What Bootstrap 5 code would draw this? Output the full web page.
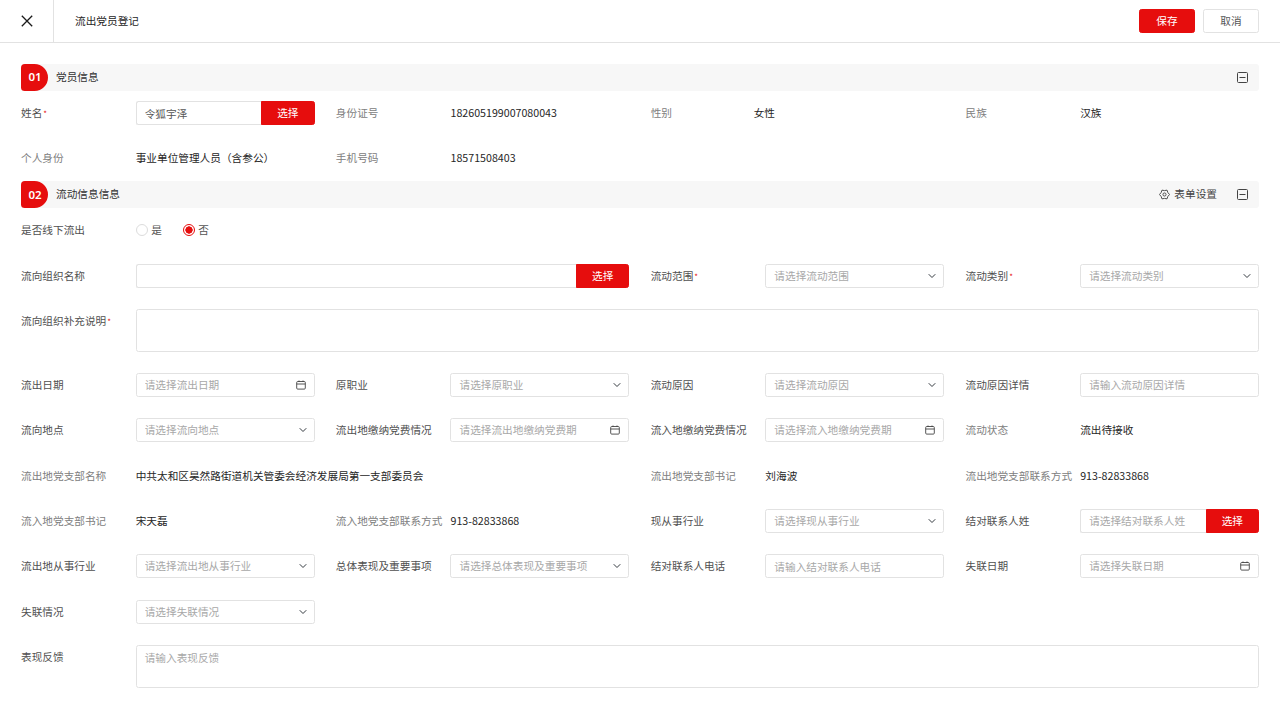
<!DOCTYPE html>
<html lang="zh">
<head>
  <meta charset="UTF-8" />
  <title>流出党员登记</title>
  <link href="https://cdn.jsdelivr.net/npm/bootstrap@5.3.2/dist/css/bootstrap.min.css" rel="stylesheet" />
  <style>
    body {
      font-family: "Noto Sans CJK SC", "Noto Sans", sans-serif;
      font-size: 10.67px;
      color: #262626;
      background: #fff;
      overflow: hidden;
    }
    .top-bar { height: 43px; border-bottom: 1px solid #e2e2e2; }
    .close-cell { width: 54px; border-right: 1px solid #e2e2e2; }
    .top-title { margin-left: 21px; color: #262626; padding-bottom: 1px; }
    .top-actions { padding-right: 21px; }
    .btn-red, .btn-red:hover {
      background: #e60d0d; border: 1px solid #e60d0d; color: #fff;
      font-size: 10.67px; padding: 0; border-radius: 2.5px;
    }
    .btn-plain, .btn-plain:hover {
      background: #fff; border: 1px solid #e2e2e2; color: #555;
      font-size: 10.67px; padding: 0; border-radius: 2.5px;
    }
    .top-btn { width: 56px; height: 24px; }
    .form-body { padding: 21px 21px 0; }
    .sec-head { height: 27px; background: #f7f7f7; border-radius: 3px; padding-right: 11px; }
    .sec-no {
      width: 27px; height: 27px; background: #e60d0d; color: #fff;
      border-radius: 4px 14px 14px 4px; font-weight: 600; font-size: 11.5px;
      font-family: "Noto Sans", sans-serif; padding: 0 0 1px 1px;
    }
    .sec-name { margin-left: 8px; padding-bottom: 1px; color: #333; }
    .sec-set { color: #444; margin-right: 20px; padding-bottom: 1px; }
    .field-grid {
      display: grid; grid-template-columns: repeat(4, 1fr);
      column-gap: 21.33px; row-gap: 21.33px;
      margin: 10px 0 11px;
    }
    .fld { display: flex; align-items: center; min-height: 24px; min-width: 0; }
    .fld-top { align-items: flex-start; }
    .span-2 { grid-column: span 2; }
    .span-4 { grid-column: span 4; }
    .fld-name { flex: 0 0 114.67px; color: #505050; line-height: 24px; height: 24px; white-space: nowrap; }
    .fld-name.muted-name { color: #808080; }
    .fld-name.short-name { flex-basis: 103px; }
    .req { color: #e60d0d; margin-left: 1px; font-size: 8px; line-height: 0; }
    .fld-val { color: #262626; white-space: nowrap; }
    .fld-ctl { flex: 1 1 auto; min-width: 0; }
    .lost-ctl { flex: 0 0 179px; }
    .form-control, .form-select {
      height: 24px; min-height: 24px; font-size: 10.67px; color: #555;
      border: 1px solid #e2e2e2; border-radius: 2.5px;
      padding: 0 8px; line-height: 22px; box-shadow: none;
    }
    .form-control::placeholder { color: #a8a8a8; }
    .form-select.is-empty { color: #a8a8a8; }
    .form-select {
      padding-right: 24px; background-position: right 6px center; background-size: 10px 8px;
    }
    textarea.form-control { height: 42.67px; min-height: 42.67px; resize: none; padding-top: 3px; line-height: 18px; }
    .date-box {
      display: flex; align-items: center; height: 24px;
      border: 1px solid #e2e2e2; border-radius: 2.5px; padding-right: 8px;
    }
    .date-box .form-control { border: 0; height: 22px; min-height: 22px; }
    .btn-pick { flex: 0 0 53.33px; height: 24px; }
    .input-group .form-control { border-right: 0; }
    .radio-row { gap: 21px; }
    .form-check { margin: 0; padding: 0; min-height: 0; gap: 3.5px; }
    .form-check .form-check-input {
      width: 12px; height: 12px; margin: 0; float: none;
      border: 1px solid #dcdcdc; box-shadow: none;
    }
    .form-check .form-check-input:checked {
      background-color: #fff; border-color: #e60d0d;
      background-image: radial-gradient(circle, #e60d0d 0 3.4px, transparent 3.9px);
    }
    .form-check-label { color: #555; }
  </style>
</head>
<body>
  <div class="top-bar d-flex align-items-stretch">
    <div class="close-cell d-flex align-items-center justify-content-center">
      <svg width="12" height="12" viewBox="0 0 12 12"><path d="M.8.8l10.4 10.4M11.2.8.8 11.2" stroke="#1a1a1a" stroke-width="1.3" fill="none"/></svg>
    </div>
    <div class="top-title d-flex align-items-center flex-grow-1">流出党员登记</div>
    <div class="top-actions d-flex align-items-center gap-2">
      <button class="btn btn-red top-btn">保存</button>
      <button class="btn btn-plain top-btn">取消</button>
    </div>
  </div>

  <div class="form-body">
    <div class="sec-head d-flex align-items-center">
      <div class="sec-no d-flex align-items-center justify-content-center">01</div>
      <div class="sec-name flex-grow-1">党员信息</div>
      <svg width="11" height="11" viewBox="0 0 11 11"><rect x=".5" y=".5" width="10" height="10" rx="1" fill="none" stroke="#444"/><path d="M2.5 5.5h6" stroke="#444"/></svg>
    </div>

    <div class="field-grid">
      <div class="fld">
        <span class="fld-name">姓名<span class="req">*</span></span>
        <div class="input-group flex-nowrap fld-ctl">
          <input class="form-control" value="令狐宇泽" />
          <button class="btn btn-red btn-pick">选择</button>
        </div>
      </div>
      <div class="fld"><span class="fld-name muted-name">身份证号</span><span class="fld-val">182605199007080043</span></div>
      <div class="fld"><span class="fld-name muted-name short-name">性别</span><span class="fld-val">女性</span></div>
      <div class="fld"><span class="fld-name muted-name">民族</span><span class="fld-val">汉族</span></div>
      <div class="fld"><span class="fld-name muted-name">个人身份</span><span class="fld-val">事业单位管理人员（含参公）</span></div>
      <div class="fld"><span class="fld-name muted-name">手机号码</span><span class="fld-val">18571508403</span></div>
    </div>

    <div class="sec-head d-flex align-items-center">
      <div class="sec-no d-flex align-items-center justify-content-center">02</div>
      <div class="sec-name flex-grow-1">流动信息信息</div>
      <div class="sec-set d-flex align-items-center gap-1">
        <svg width="11" height="11" viewBox="0 0 24 24" fill="none" stroke="#444" stroke-width="2" stroke-linejoin="round"><circle cx="12" cy="12" r="3.4"/><path d="M23 12l-3.640 4.250L17.500 21.530 12 20.500l-5.500 1.030-1.860-5.280L1 12l3.640-4.250L6.500 2.470 12 3.500l5.500-1.030 1.860 5.280z"/></svg>
        <span>表单设置</span>
      </div>
      <svg width="11" height="11" viewBox="0 0 11 11"><rect x=".5" y=".5" width="10" height="10" rx="1" fill="none" stroke="#444"/><path d="M2.5 5.5h6" stroke="#444"/></svg>
    </div>

    <div class="field-grid">
      <div class="fld span-4">
        <span class="fld-name">是否线下流出</span>
        <div class="d-flex radio-row">
          <div class="form-check d-flex align-items-center"><input class="form-check-input" type="radio" name="xx" /><label class="form-check-label">是</label></div>
          <div class="form-check d-flex align-items-center"><input class="form-check-input" type="radio" name="xx" checked /><label class="form-check-label">否</label></div>
        </div>
      </div>

      <div class="fld span-2">
        <span class="fld-name">流向组织名称</span>
        <div class="input-group flex-nowrap fld-ctl">
          <input class="form-control" />
          <button class="btn btn-red btn-pick">选择</button>
        </div>
      </div>
      <div class="fld"><span class="fld-name">流动范围<span class="req">*</span></span><div class="fld-ctl"><select class="form-select is-empty"><option>请选择流动范围</option></select></div></div>
      <div class="fld"><span class="fld-name">流动类别<span class="req">*</span></span><div class="fld-ctl"><select class="form-select is-empty"><option>请选择流动类别</option></select></div></div>

      <div class="fld fld-top span-4">
        <span class="fld-name">流向组织补充说明<span class="req">*</span></span>
        <div class="fld-ctl"><textarea class="form-control"></textarea></div>
      </div>

      <div class="fld">
        <span class="fld-name">流出日期</span>
        <div class="date-box fld-ctl"><input class="form-control" placeholder="请选择流出日期" /><svg class="flex-shrink-0" width="10" height="10" viewBox="0 0 10 10" fill="none" stroke="#444" stroke-width=".9"><rect x=".7" y="1.5" width="8.6" height="7.6" rx="1"/><path d="M.7 4h8.6M3 .5v1.5M7 .5v1.5"/></svg></div>
      </div>
      <div class="fld"><span class="fld-name">原职业</span><div class="fld-ctl"><select class="form-select is-empty"><option>请选择原职业</option></select></div></div>
      <div class="fld"><span class="fld-name">流动原因</span><div class="fld-ctl"><select class="form-select is-empty"><option>请选择流动原因</option></select></div></div>
      <div class="fld"><span class="fld-name">流动原因详情</span><div class="fld-ctl"><input class="form-control" placeholder="请输入流动原因详情" /></div></div>

      <div class="fld"><span class="fld-name">流向地点</span><div class="fld-ctl"><select class="form-select is-empty"><option>请选择流向地点</option></select></div></div>
      <div class="fld">
        <span class="fld-name">流出地缴纳党费情况</span>
        <div class="date-box fld-ctl"><input class="form-control" placeholder="请选择流出地缴纳党费期" /><svg class="flex-shrink-0" width="10" height="10" viewBox="0 0 10 10" fill="none" stroke="#444" stroke-width=".9"><rect x=".7" y="1.5" width="8.6" height="7.6" rx="1"/><path d="M.7 4h8.6M3 .5v1.5M7 .5v1.5"/></svg></div>
      </div>
      <div class="fld">
        <span class="fld-name">流入地缴纳党费情况</span>
        <div class="date-box fld-ctl"><input class="form-control" placeholder="请选择流入地缴纳党费期" /><svg class="flex-shrink-0" width="10" height="10" viewBox="0 0 10 10" fill="none" stroke="#444" stroke-width=".9"><rect x=".7" y="1.5" width="8.6" height="7.6" rx="1"/><path d="M.7 4h8.6M3 .5v1.5M7 .5v1.5"/></svg></div>
      </div>
      <div class="fld"><span class="fld-name muted-name">流动状态</span><span class="fld-val">流出待接收</span></div>

      <div class="fld span-2"><span class="fld-name muted-name">流出地党支部名称</span><span class="fld-val">中共太和区昊然路街道机关管委会经济发展局第一支部委员会</span></div>
      <div class="fld"><span class="fld-name muted-name">流出地党支部书记</span><span class="fld-val">刘海波</span></div>
      <div class="fld"><span class="fld-name muted-name">流出地党支部联系方式</span><span class="fld-val">913-82833868</span></div>

      <div class="fld"><span class="fld-name muted-name">流入地党支部书记</span><span class="fld-val">宋天磊</span></div>
      <div class="fld"><span class="fld-name muted-name">流入地党支部联系方式</span><span class="fld-val">913-82833868</span></div>
      <div class="fld"><span class="fld-name">现从事行业</span><div class="fld-ctl"><select class="form-select is-empty"><option>请选择现从事行业</option></select></div></div>
      <div class="fld">
        <span class="fld-name">结对联系人姓</span>
        <div class="input-group flex-nowrap fld-ctl">
          <input class="form-control" placeholder="请选择结对联系人姓" />
          <button class="btn btn-red btn-pick">选择</button>
        </div>
      </div>

      <div class="fld"><span class="fld-name">流出地从事行业</span><div class="fld-ctl"><select class="form-select is-empty"><option>请选择流出地从事行业</option></select></div></div>
      <div class="fld"><span class="fld-name">总体表现及重要事项</span><div class="fld-ctl"><select class="form-select is-empty"><option>请选择总体表现及重要事项</option></select></div></div>
      <div class="fld"><span class="fld-name">结对联系人电话</span><div class="fld-ctl"><input class="form-control" placeholder="请输入结对联系人电话" /></div></div>
      <div class="fld">
        <span class="fld-name">失联日期</span>
        <div class="date-box fld-ctl"><input class="form-control" placeholder="请选择失联日期" /><svg class="flex-shrink-0" width="10" height="10" viewBox="0 0 10 10" fill="none" stroke="#444" stroke-width=".9"><rect x=".7" y="1.5" width="8.6" height="7.6" rx="1"/><path d="M.7 4h8.6M3 .5v1.5M7 .5v1.5"/></svg></div>
      </div>

      <div class="fld span-4"><span class="fld-name">失联情况</span><div class="fld-ctl lost-ctl"><select class="form-select is-empty"><option>请选择失联情况</option></select></div></div>

      <div class="fld fld-top span-4">
        <span class="fld-name">表现反馈</span>
        <div class="fld-ctl"><textarea class="form-control" placeholder="请输入表现反馈"></textarea></div>
      </div>
    </div>
  </div>
  <script src="https://cdn.jsdelivr.net/npm/bootstrap@5.3.2/dist/js/bootstrap.bundle.min.js"></script>
</body>
</html>
